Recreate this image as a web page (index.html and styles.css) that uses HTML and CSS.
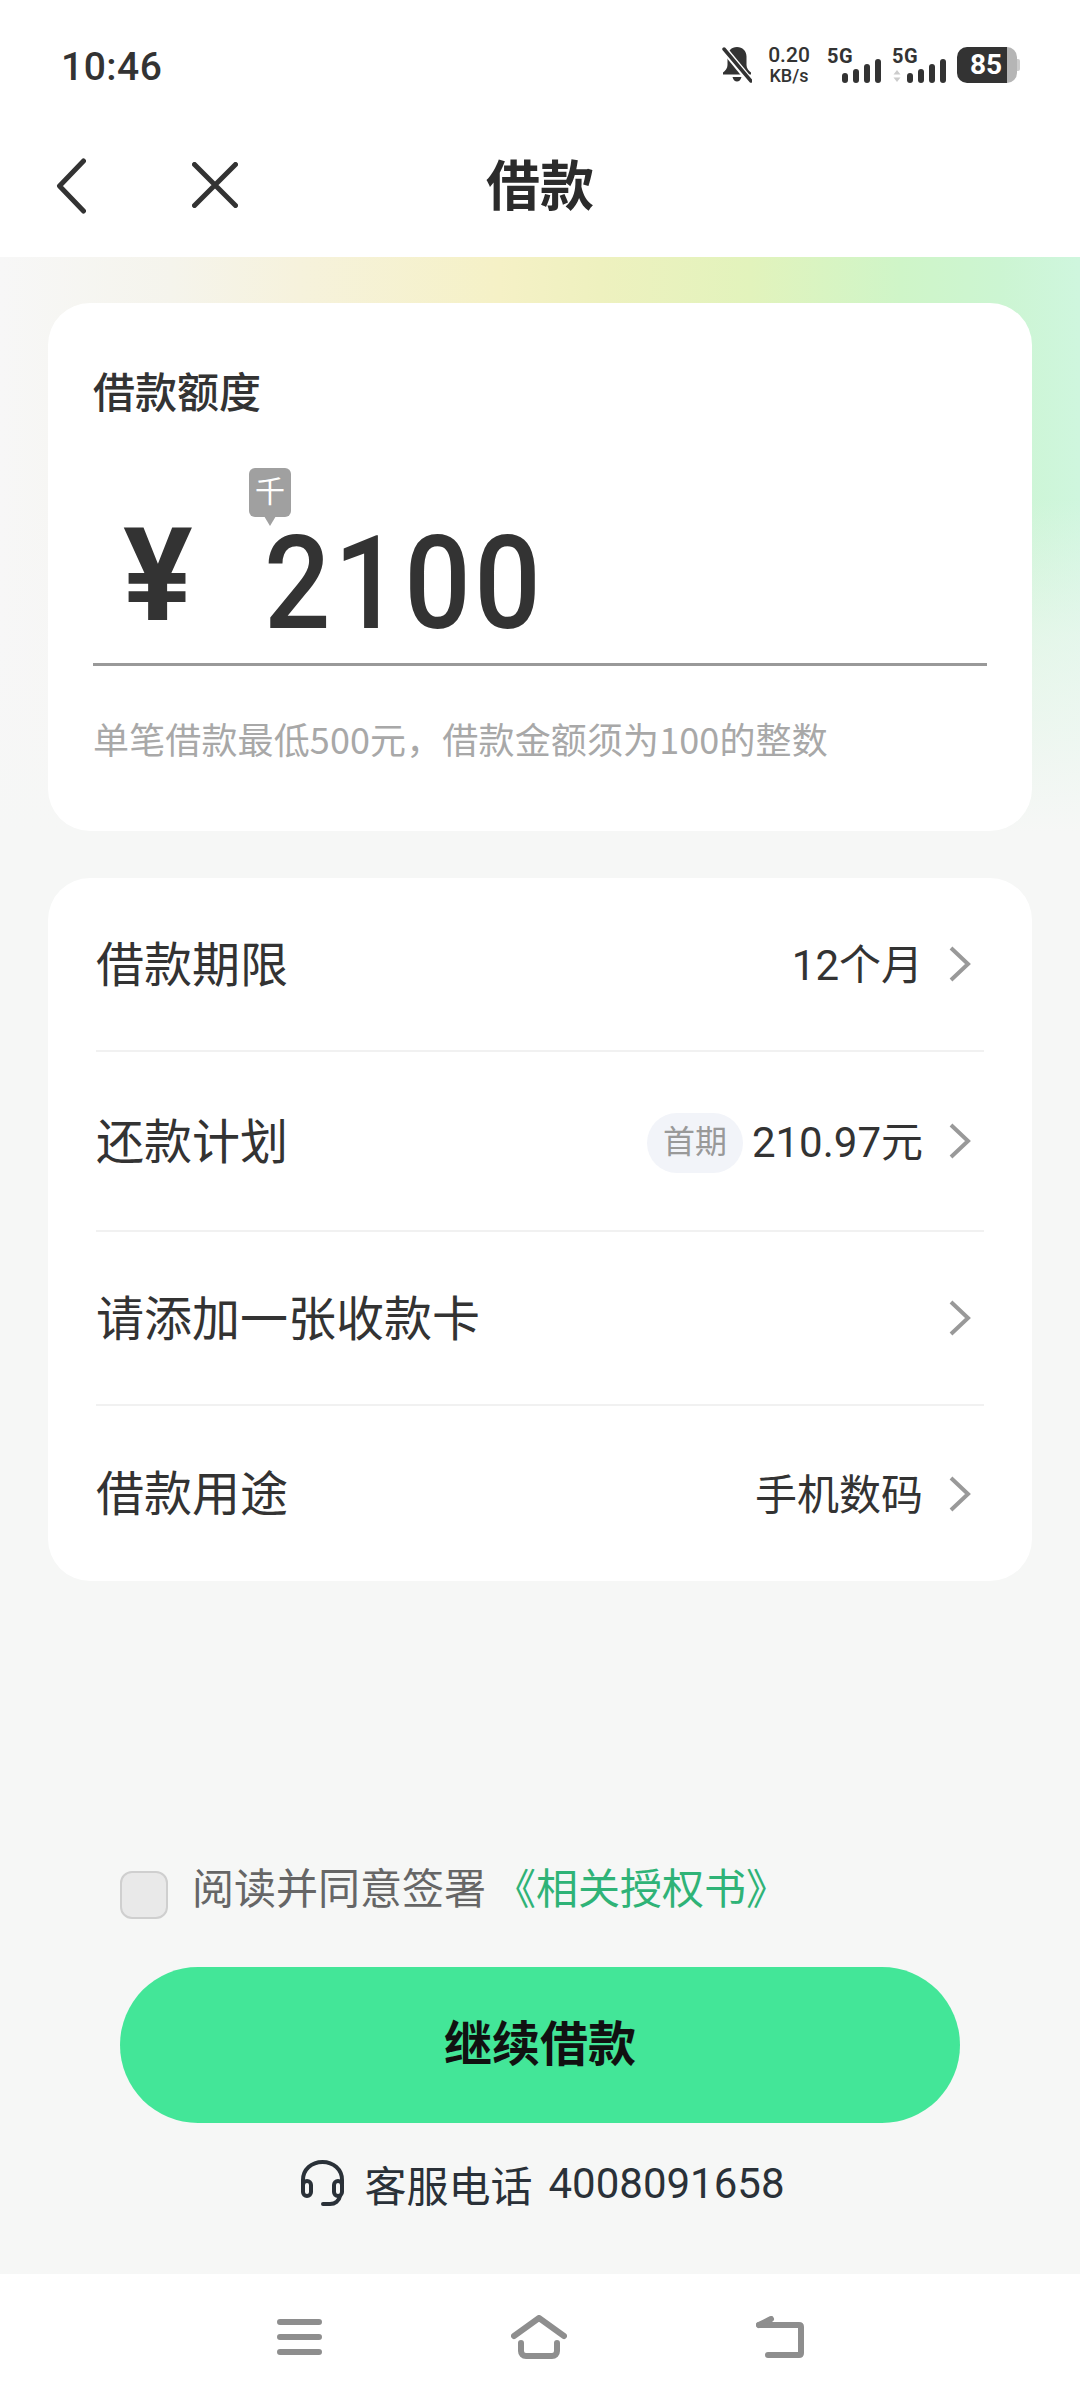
FILE: index.html
```html
<!DOCTYPE html>
<html lang="zh-CN">
<head>
<meta charset="utf-8">
<title>借款</title>
<link rel="stylesheet" href="styles.css">
</head>
<body>
<div class="screen">
  <header class="top">
    <div class="status">
      <span class="time">10:46</span>
      <div class="status-icons">
        <svg class="bell" viewBox="0 0 30 36" width="30" height="36"><path fill="#333" d="M15 0c-5.500 0-9.500 4-9.500 9.500v8.500c0 3-2 5.500-4.500 7.500v2h28v-2c-2.500-2-4.500-4.500-4.500-7.500V9.500C24.500 4 20.500 0 15 0zM10.500 30c.8 3 2.500 4.500 4.500 4.500s3.700-1.500 4.500-4.500z"/><path d="M1 1L29 35" stroke="#fff" stroke-width="7"/><path d="M2 2L29 34" stroke="#333" stroke-width="3.500" stroke-linecap="round"/></svg>
        <div class="speed"><span class="speed-num">0.20</span><span class="speed-unit">KB/s</span></div>
        <div class="sig">
          <span class="sig-label">5G</span>
          <svg class="sig-bars" viewBox="0 0 40 24" width="40" height="24"><g fill="#333"><rect x="0" y="14" width="6" height="10" rx="3"/><rect x="11" y="10" width="6" height="14" rx="3"/><rect x="22" y="5" width="6" height="19" rx="3"/><rect x="33" y="0" width="6" height="24" rx="3"/></g></svg>
        </div>
        <div class="sig">
          <span class="sig-label">5G</span>
          <svg class="sig-arrows" viewBox="0 0 8 12" width="8" height="12"><path fill="#ccc" d="M4 0l3.500 4.500H.5zM4 12L.5 7.500h7z"/></svg>
          <svg class="sig-bars" viewBox="0 0 40 24" width="40" height="24"><g fill="#333"><rect x="0" y="14" width="6" height="10" rx="3"/><rect x="11" y="10" width="6" height="14" rx="3"/><rect x="22" y="5" width="6" height="19" rx="3"/><rect x="33" y="0" width="6" height="24" rx="3"/></g></svg>
        </div>
        <div class="battery"><div class="battery-body"><span class="battery-fill">85</span></div><span class="battery-nib"></span></div>
      </div>
    </div>
    <nav class="nav">
      <svg class="nav-back" viewBox="0 0 30 56" width="30" height="56"><path d="M27.500 3L3.500 28l24 25" fill="none" stroke="#333" stroke-width="5" stroke-linecap="round" stroke-linejoin="round"/></svg>
      <svg class="nav-close" viewBox="0 0 46 46" width="46" height="46"><path d="M2.500 2.500l41 41M43.500 2.500l-41 41" fill="none" stroke="#333" stroke-width="5" stroke-linecap="round"/></svg>
      <h1 class="nav-title">借款</h1>
    </nav>
  </header>

  <main class="main">
    <section class="card amount-card">
      <h2 class="amount-title">借款额度</h2>
      <div class="amount-row">
        <span class="currency">¥</span>
        <span class="amount">2100</span>
        <span class="unit-tip">千</span>
      </div>
      <p class="hint">单笔借款最低500元，借款金额须为100的整数</p>
    </section>

    <section class="card list">
      <div class="row">
        <span class="row-label">借款期限</span>
        <div class="row-right"><span class="row-value">12个月</span><svg class="chev" viewBox="0 0 22 36" width="22" height="36"><path d="M2 2l17 16L2 34" fill="none" stroke="#999" stroke-width="4"/></svg></div>
      </div>
      <div class="row">
        <span class="row-label">还款计划</span>
        <div class="row-right"><span class="badge">首期</span><span class="row-value">210.97元</span><svg class="chev" viewBox="0 0 22 36" width="22" height="36"><path d="M2 2l17 16L2 34" fill="none" stroke="#999" stroke-width="4"/></svg></div>
      </div>
      <div class="row">
        <span class="row-label">请添加一张收款卡</span>
        <div class="row-right"><svg class="chev" viewBox="0 0 22 36" width="22" height="36"><path d="M2 2l17 16L2 34" fill="none" stroke="#999" stroke-width="4"/></svg></div>
      </div>
      <div class="row">
        <span class="row-label">借款用途</span>
        <div class="row-right"><span class="row-value">手机数码</span><svg class="chev" viewBox="0 0 22 36" width="22" height="36"><path d="M2 2l17 16L2 34" fill="none" stroke="#999" stroke-width="4"/></svg></div>
      </div>
    </section>

    <div class="bottom-block">
      <div class="agree">
        <span class="check"></span>
        <span class="agree-text">阅读并同意签署</span>
        <span class="agree-link">《相关授权书》</span>
      </div>
      <button class="submit"><span class="submit-text">继续借款</span></button>
      <div class="service">
        <svg class="headset" viewBox="0 0 45 46" width="45" height="46"><g fill="none" stroke="#2a3138" stroke-width="4" stroke-linecap="round" stroke-linejoin="round"><path d="M3 24v-4C3 9.500 11.500 2 22.500 2S42 9.500 42 20v4"/><rect x="3" y="21" width="8" height="15" rx="4"/><rect x="34" y="21" width="8" height="15" rx="4"/><path d="M40 36c-1 5-5 8-10 8h-7"/></g></svg>
        <span class="service-label">客服电话</span>
        <span class="service-num">4008091658</span>
      </div>
    </div>
  </main>

  <footer class="sysbar">
    <svg viewBox="0 0 45 36" width="45" height="36"><path d="M3 3h39M3 18h39M3 33h39" stroke="#8e8e8e" stroke-width="6" stroke-linecap="round"/></svg>
    <svg viewBox="0 0 56 44" width="56" height="44"><g fill="none" stroke="#8e8e8e" stroke-width="6" stroke-linecap="round" stroke-linejoin="round"><path d="M3 21L28 3l25 18"/><path d="M10 28v8c0 3 2 5 5 5h26c3 0 5-2 5-5v-8"/></g></svg>
    <svg viewBox="0 0 48 42" width="48" height="42"><g fill="none" stroke="#8e8e8e" stroke-width="6" stroke-linecap="round" stroke-linejoin="round"><path d="M3 9h40c1.500 0 2 .8 2 2v26c0 1.500-.5 2-2 2H12"/><path d="M3 9l12-6"/></g></svg>
  </footer>
</div>
</body>
</html>
```
FILE: styles.css
```css
* { box-sizing: border-box; }
html, body { margin: 0; padding: 0; }
body { font-family: Roboto, "Noto Sans CJK SC", sans-serif; color: #333; background: #f7f7f7; }
h1, h2, p { margin: 0; font-weight: inherit; }

.screen { width: 1080px; height: 2400px; display: flex; flex-direction: column; overflow: hidden; }

.top { background: #fff; height: 257px; flex: none; }
.status { height: 130px; padding: 0 60px 0 61px; display: flex; align-items: center; justify-content: space-between; }
.time { font-size: 39px; font-weight: 500; letter-spacing: .5px; color: #333; padding-top: 3px; }
.status-icons { display: flex; align-items: center; }
.bell { margin-right: 15px; }
.speed { width: 44px; margin-right: 16px; display: flex; flex-direction: column; align-items: center; line-height: 1; color: #333; }
.speed-num { font-size: 21px; font-weight: 500; }
.speed-unit { font-size: 18px; font-weight: 500; margin-top: 1px; }
.sig { position: relative; width: 65px; height: 36px; }
.sig-label { position: absolute; left: 0; top: -1px; font-size: 20px; font-weight: 700; line-height: 20px; letter-spacing: .5px; color: #333; }
.sig-bars { position: absolute; left: 15px; bottom: 0; }
.sig-arrows { position: absolute; left: 1px; bottom: 1px; }
.battery { display: flex; align-items: center; }
.battery-body { width: 60px; height: 36px; border-radius: 10px; background: linear-gradient(to right, #333 50px, #b5b5b5 50px); overflow: hidden; }
.battery-fill { display: block; width: 50px; padding-left: 8px; text-align: center; color: #fff; font-size: 28px; font-weight: 700; line-height: 36px; }
.battery-nib { width: 3px; height: 12px; background: #ccc; border-radius: 0 2px 2px 0; }

.nav { position: relative; height: 127px; display: flex; align-items: center; justify-content: center; }
.nav-back { position: absolute; left: 56px; top: 28px; }
.nav-close { position: absolute; left: 192px; top: 32px; }
.nav-title { font-family: "Noto Sans CJK SC", sans-serif; font-size: 54px; font-weight: 700; color: #2b2b2b; line-height: 1; margin-top: -22px; }

.main { flex: 1; display: flex; flex-direction: column; padding: 46px 48px 0; background:
  linear-gradient(to bottom, rgba(247,247,247,0) 0, rgba(247,247,247,0) 240px, rgba(247,247,247,.55) 380px, #f6f7f6 575px),
  linear-gradient(to right, #f7f7f7 0, #f5f4ec 170px, #f6f2dc 300px, #f5f1c6 500px, #eef1bf 600px, #e2f3bc 750px, #cff5c8 900px, #ccf5d2 1000px, #cff6de 1080px);
}

.card { background: #fff; border-radius: 42px; }
.amount-card { height: 528px; padding: 57px 45px 0; }
.amount-title { font-family: "Noto Sans CJK SC", sans-serif; font-size: 42px; font-weight: 500; line-height: 60px; color: #333; }
.amount-row { position: relative; height: 246px; border-bottom: 3px solid #999; display: flex; align-items: flex-end; padding: 0 0 29px 30px; }
.currency { font-size: 130px; font-weight: 700; line-height: 100px; color: #333; margin-bottom: 8px; width: 141px; }
.amount { font-size: 130px; font-weight: 500; line-height: 100px; letter-spacing: 4px; color: #333; transform: scaleX(.9); transform-origin: left center; }
.unit-tip { position: absolute; left: 156px; top: 48px; width: 42px; height: 49px; background: #a0a0a0; border-radius: 6px; color: #fff; font-family: "Noto Sans CJK SC", sans-serif; font-size: 30px; line-height: 42px; text-align: center; }
.unit-tip::after { content: ""; position: absolute; left: 15px; bottom: -9px; border: 6px solid transparent; border-top: 10px solid #a0a0a0; border-bottom: 0; }
.hint { margin-top: 50px; font-family: "Noto Sans CJK SC", sans-serif; font-size: 36px; line-height: 44px; letter-spacing: .13px; color: #a8a8a8; }

.list { margin-top: 47px; height: 703px; padding: 0 48px; display: grid; grid-template-rows: 174px 180px 174px 175px; }
.row { display: flex; align-items: center; justify-content: space-between; border-bottom: 2px solid #f1f1f1; }
.row:last-child { border-bottom: 0; }
.row-label { font-family: "Noto Sans CJK SC", sans-serif; font-size: 48px; color: #333; padding-bottom: 7px; }
.row-right { display: flex; align-items: center; }
.row-value { font-size: 42px; color: #333; font-family: Roboto, "Noto Sans CJK SC", sans-serif; padding-bottom: 5px; }
.badge { width: 96px; height: 60px; border-radius: 30px; background: #f2f4f9; color: #999; font-size: 32px; line-height: 52px; text-align: center; margin: 4px 9px 0 0; font-family: "Noto Sans CJK SC", sans-serif; }
.chev { margin-left: 26px; margin-right: 13px; }

.bottom-block { margin-top: auto; padding: 0 72px 68px; display: flex; flex-direction: column; }
.agree { display: flex; align-items: center; height: 48px; font-family: "Noto Sans CJK SC", sans-serif; font-size: 42px; }
.check { width: 48px; height: 48px; border-radius: 12px; background: #e9e9e9; border: 2px solid #cfcfcf; margin-right: 24px; }
.agree-text { color: #666; margin-right: 8px; padding-bottom: 20px; }
.agree-link { color: #2fb377; padding-bottom: 20px; }
.submit { display: block; margin-top: 48px; height: 156px; width: 100%; border: 0; border-radius: 78px; background: #43e698; font-family: "Noto Sans CJK SC", sans-serif; font-size: 48px; font-weight: 700; color: #111; }
.submit-text { display: block; padding-bottom: 10px; }
.service { margin-top: 37px; padding-left: 5px; display: flex; align-items: center; justify-content: center; height: 46px; color: #2a3138; font-size: 42px; }
.headset { margin-right: 19px; }
.service-label { font-family: "Noto Sans CJK SC", sans-serif; margin-right: 16px; }
.service-num { font-family: Roboto, sans-serif; }

.sysbar { height: 126px; flex: none; background: #fff; display: flex; justify-content: space-between; align-items: center; padding: 0 276px 0 277px; }
```
